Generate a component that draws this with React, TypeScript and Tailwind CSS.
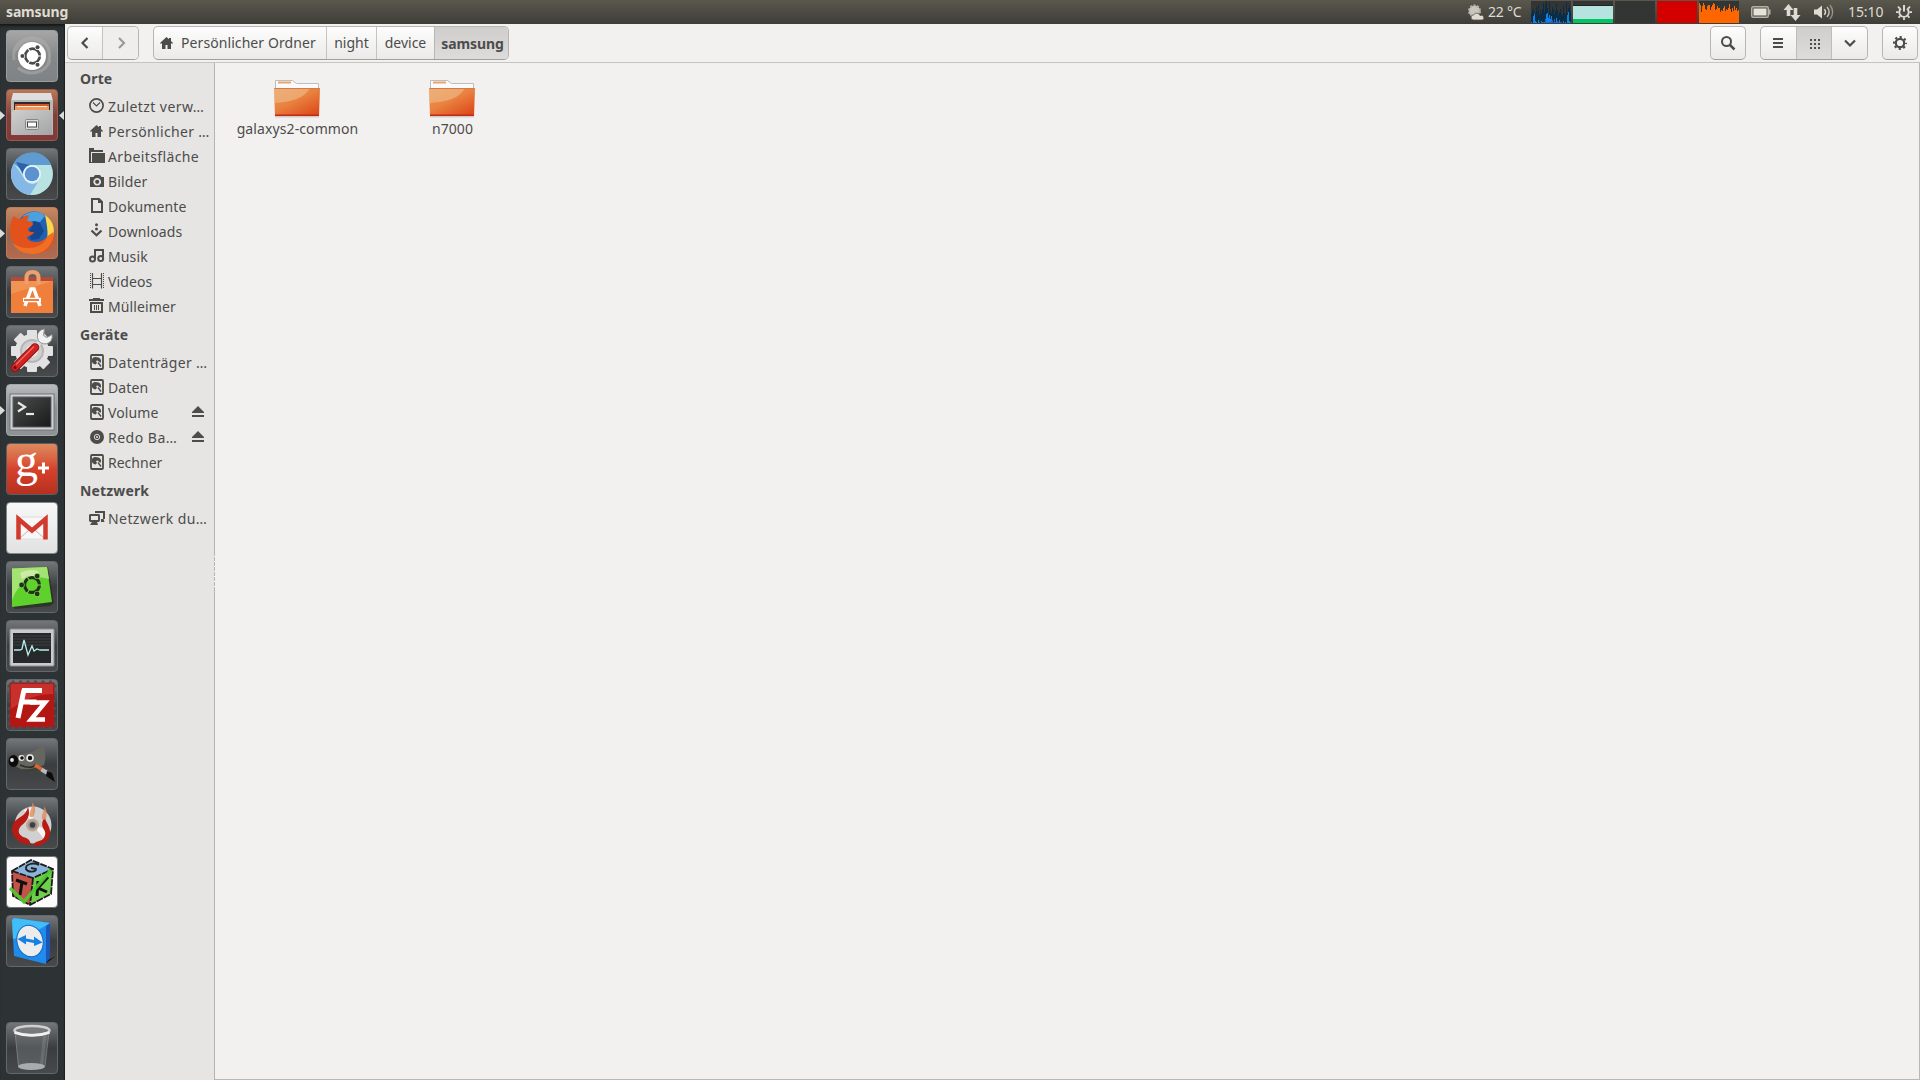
import React from "react";

type Kids = { children?: React.ReactNode };

/* ---------- Top panel ---------- */

const cpuLow = [2, 1, 4, 1, 2, 1, 10, 2, 1, 3, 2, 1, 5, 9, 4, 11, 2, 1, 5, 3, 1, 2, 4, 1];
const cpuHigh = [9, 12, 14, 7, 10, 16, 12, 18, 8, 13, 9, 14, 20, 11, 19, 22, 15, 9, 21, 12, 10, 16, 14, 9, 12, 19, 13, 8, 11, 14, 9, 7, 17, 10, 8, 20, 9, 15, 18, 12];
const cpuBlue = [1, 0, 7, 9, 2, 1, 0, 3, 1, 0, 2, 1, 0, 1, 4, 9, 10, 5, 8, 4, 7, 3, 1, 2, 0, 5, 1, 0, 3, 1, 0, 0, 2, 0, 1, 0, 8, 11, 2, 1];
const loadTop = [2, 11, 10, 16, 19, 14, 13, 12, 16, 17, 14, 12, 15, 17, 19, 15, 12, 13, 16, 14, 11, 10, 12, 11, 14, 13, 11, 13, 12, 14, 15, 13, 10, 14, 11, 13, 12, 14, 11, 12];

function Graph({ children }: Kids) {
  return (
    <svg className="block h-[22px] w-10 bg-[#333535]" viewBox="0 0 40 22" shapeRendering="crispEdges">
      {children}
    </svg>
  );
}

function TopBar() {
  return (
    <header className="flex h-6 w-full shrink-0 items-center bg-linear-to-b from-[#5a584d] to-[#3e3d38] text-[#dfdbd2]">
      <div className="w-[1467px] pl-[6px] text-[14px] leading-6 font-bold tracking-[-0.15px]">samsung</div>
      <svg className="h-[18px] w-[18px] shrink-0" viewBox="0 0 18 18">
        <circle cx="7.5" cy="8" r="5.5" fill="#c9c5bc" stroke="#b5b1a8" strokeWidth="2" strokeDasharray="2.2 1.255" />
        <path d="M6.5 17a2.6 2.6 0 0 1 .3-5.2 3.4 3.4 0 0 1 6.2.8 2.3 2.3 0 0 1 2.5 4.4z" fill="#dfdbd2" stroke="#55534a" strokeWidth=".8" />
      </svg>
      <div className="ml-[3px] w-[43px] text-[14px] leading-6 tracking-[-0.2px] whitespace-nowrap">22 °C</div>
      <div className="flex gap-[2px]">
        <Graph>
          {cpuHigh.map((h, i) => <rect key={i} x={i} y={22 - h} width="1" height={h} fill="#0a2c45" />)}
          {cpuBlue.map((h, i) => <rect key={i} x={i} y={22 - h} width="1" height={h} fill="#1080e8" />)}
          {cpuLow.map((h, i) => <rect key={i} x={i + 8} y={22 - h / 3} width="1" height={h / 3} fill="#1a5fc0" />)}
        </Graph>
        <Graph>
          <rect y="4" width="40" height="1" fill="#222" />
          <rect y="5" width="40" height="13" fill="#b5e3e0" />
          <rect y="18" width="40" height="4" fill="#00c562" />
        </Graph>
        <Graph />
        <Graph><rect width="40" height="22" fill="#d40000" /></Graph>
        <Graph>
          {loadTop.map((h, i) => {
            const v = i < 2 ? 20 - i * 2 : h + (i % 5 === 0 ? 4 : 1);
            return <rect key={i} x={i} y={22 - v} width="1" height={v} fill="#ff6600" />;
          })}
        </Graph>
      </div>
      <svg className="ml-3 h-[14px] w-5 shrink-0" viewBox="0 0 20 14">
        <rect x=".75" y="1.75" width="16.5" height="10.5" rx="1.5" fill="none" stroke="#b5b2a8" strokeWidth="1.5" />
        <rect x="2.5" y="3.5" width="13" height="7" fill="#e8e3d8" />
        <path d="M18 4.5h1.5v5H18z" fill="#b5b2a8" />
      </svg>
      <svg className="ml-3 h-[18px] w-[18px] shrink-0" viewBox="0 0 18 18" fill="#dfdbd2">
        <path d="M5.5 1 10.5 7H7.3v6H3.7V7H.5z" />
        <path d="M12.5 18 17.5 12h-3.200V5h-3.600v7H7.5z" />
      </svg>
      <svg className="ml-[13px] h-4 w-5 shrink-0" viewBox="0 0 20 16" fill="none">
        <path d="M0 5.5h3L8 1.5v13L3 10.500H0z" fill="#dfdbd2" />
        <path d="M10.3 5.2a4 4 0 0 1 0 5.6" stroke="#dfdbd2" strokeWidth="1.6" />
        <path d="M13 3a7 7 0 0 1 0 10" stroke="#c2beb5" strokeWidth="1.5" />
        <path d="M15.8 1a10 10 0 0 1 0 14" stroke="#98958b" strokeWidth="1.4" />
      </svg>
      <div className="ml-[14px] w-[48px] text-[14px] leading-6 tracking-[-0.1px]">15:10</div>
      <svg className="h-[18px] w-4 shrink-0" viewBox="0 0 16 18" fill="none" stroke="#dfdbd2">
        <path d="M5 5.6a4.7 4.7 0 1 0 6 0" strokeWidth="1.9" />
        <path d="M8 2v6.500" strokeWidth="2" />
        <path d="M0 9.200h2.500M13.500 9.200H16M2 3.700l1.800 1.800M14 3.700l-1.800 1.800M2.500 14.700l1.700-1.700M13.500 14.700l-1.700-1.700M8 14.500V17" strokeWidth="1.800" />
      </svg>
    </header>
  );
}

/* ---------- Launcher ---------- */

const glass = "bg-linear-to-b from-[#74777a] via-[#3a3d3f] to-[#47494b] border-[#65686a]";

function Tile({ children, look = glass, running, active }: Kids & { look?: string; running?: boolean; active?: boolean }) {
  return (
    <div className="flex h-[52px] w-[65px] shrink-0 items-center">
      <div className="w-[6px] shrink-0">
        {running && (
          <svg className="h-[9px] w-[5px]" viewBox="0 0 5 9"><path d="M0 0v9l5-4.500z" fill="#dcdcdc" /></svg>
        )}
      </div>
      <div className={`h-[52px] w-[52px] shrink-0 rounded-[4px] border ${look}`}>
        <svg className="-m-px block h-[52px] w-[52px] overflow-visible" viewBox="0 0 52 52">{children}</svg>
      </div>
      <div className="flex w-[6px] shrink-0 justify-end">
        {active && (
          <svg className="h-[9px] w-[5px]" viewBox="0 0 5 9"><path d="M5 0v9L0 4.500z" fill="#dcdcdc" /></svg>
        )}
      </div>
    </div>
  );
}

function Circle3({ cx, cy, r, color, halo, w }: { cx: number; cy: number; r: number; color: string; halo: string; w: number }) {
  const d = r * 1.38;
  const pts = [180, -60, 60].map((a) => [cx + d * Math.cos((a * Math.PI) / 180), cy + d * Math.sin((a * Math.PI) / 180)]);
  return (
    <g>
      <circle cx={cx} cy={cy} r={r} fill="none" stroke={color} strokeWidth={w} />
      {[0, 120, 240].map((a) => (
        <path key={a} d={`M${cx + r - w} ${cy}h${w * 2}`} stroke={halo} strokeWidth="1" transform={`rotate(${a} ${cx} ${cy})`} />
      ))}
      {pts.map(([x, y], i) => <circle key={i} cx={x} cy={y} r={w * 0.75} fill={color} stroke={halo} strokeWidth="1.2" paintOrder="stroke" />)}
    </g>
  );
}

function Launcher() {
  return (
    <nav className="flex w-[65px] shrink-0 flex-col border-r border-[#1c1f20] bg-[#2d3335] pt-[6px] shadow-[inset_0_4px_3px_-2px_#151717]">
      <div className="flex flex-col gap-[7px]">
        {/* Dash */}
        <Tile look="bg-linear-to-b from-[#a7a6a6] via-[#85898c] to-[#808386] border-[#9c9d9f]">
          <path d="M8 30C5 14 20 5 32 9c10 3 14 14 10 25M12 38c12 9 28 5 32-8M10 20c5-12 20-14 28-6" fill="none" stroke="#b5b1ad" strokeWidth="3" opacity=".5" />
          <circle cx="26" cy="26" r="14" fill="#fff" />
          <Circle3 cx={26.5} cy={26} r={7.3} color="#4a4a4a" halo="#fff" w={2.7} />
        </Tile>
        {/* Files */}
        <Tile running active look="bg-linear-to-b from-[#b97a58] via-[#813f3b] to-[#823a39] border-[#9a5a50]">
          <defs>
            <linearGradient id="cab" x1="0" y1="0" x2="1" y2="1"><stop offset="0" stopColor="#cfcfce" /><stop offset="1" stopColor="#a3a4a5" /></linearGradient>
          </defs>
          <path d="M7 4h38l2 8H5z" fill="#dedede" />
          <rect x="5" y="11" width="42" height="35" rx="1" fill="#b8b9b9" />
          <rect x="8" y="13" width="36" height="10" fill="#2c2a2a" />
          <rect x="9" y="15" width="34" height="4" fill="#d25527" />
          <rect x="9" y="17" width="34" height="4" fill="#f09a62" />
          <rect x="11" y="17" width="30" height="1" fill="#ffe9d8" />
          <path d="M8 21h36l2 2v23H6V23z" fill="url(#cab)" />
          <rect x="19.5" y="30.5" width="13" height="10" rx="1" fill="#dcdcdc" stroke="#858687" />
          <rect x="21.5" y="33" width="9" height="5" fill="#fff" stroke="#444" />
        </Tile>
        {/* Chromium */}
        <Tile>
          <circle cx="26" cy="26" r="21" fill="#b9e3e2" />
          <path d="M7.5 15.5A21 21 0 0 1 45.500 17H26a9 9 0 0 0-8.500 6z" fill="#5f9bd0" />
          <path d="M7.8 15.5A21 21 0 0 0 24 47l8-13a9 9 0 0 1-14-4z" fill="#85b8e6" />
          <path d="M10 14l8 14a8 8 0 0 1 6-11z" fill="#2a62b0" />
          <circle cx="26" cy="26" r="9" fill="#eaf5fb" />
          <circle cx="26" cy="26" r="7.3" fill="#5a93cf" />
        </Tile>
        {/* Firefox */}
        <Tile running look="bg-linear-to-b from-[#c88962] via-[#9c6650] to-[#b26a4e] border-[#c07a5c]">
          <circle cx="28" cy="21" r="16.5" fill="#1e62b4" />
          <path d="M17 9c6-5 17-6 22 0l-5 6-7-1-5 2z" fill="#4ba0dd" />
          <path d="M28 14l6 2 4 8-5 8-8 1-2-8z" fill="#174791" />
          <path d="M8 9c2 2 4 3 7 3 3-3 5-4 8-4l-2 6c4 0 6 1 6 3s-4 3-5 5c0 3 3 3 6 3-1 4-6 3-7 6 3 5 14 6 20-1 2-4 3-8 2-12 7 6 7 17 1 23C32 53 6 46 4 25c0-7 1-12 4-16z" fill="#e4521b" />
          <path d="M39 8c7 5 10 12 8.500 19-1.500 7-6 11-11 13 4-5 5.500-10 5-15-.3-6-1.500-12-2.500-17z" fill="#fbd84a" />
          <path d="M47.500 25c.5 13-9 22-21 22-9 0-16-4-20-11 14 10 32 4 35-7z" fill="#ee6f25" />
        </Tile>
        {/* Software centre */}
        <Tile>
          <path d="M5 11h42v5H5z" fill="#b24a37" />
          <path d="M5 15h42v32H5z" fill="#ef7f3a" />
          <path d="M5 15h42L5 28z" fill="#f2a064" opacity=".6" />
          <path d="M20.500 18v-6q0-6 6-6t6 6v6" fill="none" stroke="#eda06b" strokeWidth="4" />
          <path d="M19 40l6-17h3l6 17" fill="none" stroke="#fff" strokeWidth="3.5" />
          <path d="M17 34h18" stroke="#fff" strokeWidth="4.5" />
          <path d="M18 34h15" stroke="#e9722c" strokeWidth="1.8" />
        </Tile>
        {/* System settings */}
        <Tile>
          <g fill="#e2e2e2">
            {[0, 45, 90, 135].map((a) => <rect key={a} x="21" y="5" width="10" height="42" rx="1" transform={`rotate(${a} 26 26)`} />)}
            <circle cx="26" cy="26" r="17" />
          </g>
          <circle cx="26" cy="26" r="11" fill="#d0d0d0" stroke="#b6b6b6" strokeWidth="2" />
          <circle cx="26" cy="26" r="6" fill="#ececec" />
          <path d="M25 26L37 14" stroke="#dcdcdc" strokeWidth="5" />
          <path d="M46 9.500a7.500 7.500 0 1 1-7.500-5.500l-1 6.500 3.500 2z" fill="#f1f1f1" stroke="#8f8f8f" strokeWidth="1" />
          <path d="M9 42.500L29 22.500" stroke="#8d1212" strokeWidth="8.5" strokeLinecap="round" />
          <path d="M9 42.500L29 22.500" stroke="#d32222" strokeWidth="6.5" strokeLinecap="round" />
          <path d="M10 39.500L28 21.500" stroke="#ee6b62" strokeWidth="1.5" />
          <circle cx="9" cy="42.5" r="1.5" fill="#5e0a0a" />
        </Tile>
        {/* Terminal */}
        <Tile running look="bg-linear-to-b from-[#b9bbbe] via-[#8c9094] to-[#8f9396] border-[#a4a7aa]">
          <defs><linearGradient id="scr" x1="0" y1="0" x2="1" y2="1"><stop offset="0" stopColor="#4b4e4d" /><stop offset="1" stopColor="#171a19" /></linearGradient></defs>
          <rect x="4" y="10" width="44" height="36" fill="#d0d2d4" stroke="#70757a" />
          <rect x="7" y="13" width="38" height="30" fill="url(#scr)" stroke="#5c6063" />
          <path d="M12 18.500l7 4.500-7 4.500" fill="none" stroke="#e8e8e8" strokeWidth="2.2" />
          <path d="M20 30h8" stroke="#e8e8e8" strokeWidth="2.2" />
        </Tile>
        {/* Google plus */}
        <Tile look="bg-linear-to-b from-[#dc8a5f] via-[#d6412c] to-[#b8301f] border-[#5c5f60]">
          <text x="9" y="33" fontFamily="Liberation Serif" fontSize="46" fill="#fff">g</text>
          <path d="M32 25h11M37.500 19.500v11" stroke="#fff" strokeWidth="3" />
        </Tile>
        {/* Gmail */}
        <Tile look="bg-linear-to-b from-[#f8f8f8] to-[#e2e2e2] border-[#85888a]">
          <rect x="11" y="15" width="30" height="22" fill="#f7f7f7" stroke="#ddd" />
          <path d="M13 37l10-9M39 37l-10-9" stroke="#d9a9a1" strokeWidth="1" />
          <path d="M12.500 37.500V17L26 28.500 39.500 17v20.500" fill="none" stroke="#d23a2e" strokeWidth="4.5" />
        </Tile>
        {/* Ubuntu tweak */}
        <Tile>
          <path d="M7 8l35-2 6 36-4 3-36 3z" fill="#1e2a15" opacity=".6" />
          <path d="M6 7.500L41 6l5 35-40 5z" fill="#5fd02c" />
          <path d="M6 7.500L41 6l2 12q-14-4-24 3-8 5-13 18z" fill="#a5e274" />
          <path d="M14 12q8-5 18-2l2 6q-10-3-18 2z" fill="#dfeebd" opacity=".7" />
          <Circle3 cx={26} cy={24} r={7.5} color="#20321a" halo="#84d857" w={3.2} />
        </Tile>
        {/* System monitor */}
        <Tile>
          <rect x="4" y="9" width="44" height="37" rx="1" fill="#c9cbcc" stroke="#8e9193" />
          <rect x="7" y="13" width="38" height="30" fill="#26292a" />
          <path d="M7 16h38M7 19h38M7 22h38M7 25h38" stroke="#3e4142" />
          <path d="M8 30h6l2-1 2-9 4 15 4-9 2 5 3-2 3 1h9" fill="none" stroke="#b8ecec" strokeWidth="1.3" />
        </Tile>
        {/* FileZilla */}
        <Tile>
          <rect x="3.5" y="3.5" width="45" height="45" fill="#b41614" />
          <g fill="#4b4e50">
            {[7, 14.5, 22, 29.5, 37, 44.5].map((p) => (
              <React.Fragment key={p}>
                <circle cx={p} cy="3" r="1.7" /><circle cx={p} cy="49" r="1.7" />
                <circle cx="3" cy={p} r="1.7" /><circle cx="49" cy={p} r="1.7" />
              </React.Fragment>
            ))}
          </g>
          <path d="M5 5h42v10Q26 14 5 30z" fill="#d4433a" opacity=".6" />
          <path d="M12 39l6-28M16 11.500h20M14.500 23h16" fill="none" stroke="#fff" strokeWidth="5" />
          <path d="M24 23.500h15L25 40.500h14" fill="none" stroke="#fff" strokeWidth="4.5" />
        </Tile>
        {/* GIMP */}
        <Tile>
          <path d="M4 22c5-3 9-5 13-6 6-1 14-3 20-9 3 4 3 15 1 20-3 8-16 10-23 4-4-2-9-4-11-9z" fill="#64665f" />
          <path d="M15 31c6 6 20 4 23-4q-11 5-23 4z" fill="#3d3f3b" />
          <ellipse cx="7.5" cy="23" rx="5" ry="6" fill="#0c0c0c" /><circle cx="6" cy="22" r="1.9" fill="#e8e8e8" />
          <circle cx="15.5" cy="20" r="3" fill="#ececec" /><circle cx="24" cy="20" r="3.8" fill="#ececec" />
          <circle cx="16" cy="20" r="1.8" fill="#111" /><circle cx="24" cy="20" r="2.2" fill="#111" />
          <path d="M14 27q12 5 16-1" fill="none" stroke="#2c2c2c" strokeWidth="1.5" />
          <path d="M29 27l7 4.500" stroke="#e2622e" strokeWidth="3.5" />
          <path d="M35.500 31.500l6 3.500" stroke="#b7bcc0" strokeWidth="4" />
          <path d="M41 33l5 2 3 9-9-6z" fill="#0c0c0c" />
        </Tile>
        {/* Disc burner */}
        <Tile>
          <circle cx="27" cy="28" r="18.5" fill="#d0d0d0" />
          <path d="M27 28L18 13a18 18 0 0 1 9-3zM27 28l17 5a18 18 0 0 1-6 9z" fill="#f6f6f6" />
          <circle cx="26.5" cy="28" r="6.5" fill="#c2a58d" /><circle cx="26.5" cy="28" r="3.5" fill="#3c4043" stroke="#8b9196" strokeWidth="1.5" />
          <path d="M19 47C6 43 3 31 9 24c6-5 11-6 13-14 3 8-1 14-6 18-5 5-4 9 1 12 5 1 7 3 8 8z" fill="#b81a14" />
          <path d="M27 49c2-6 7-4 10-7 4-5 2-8 0-11-2-5 0-8 2-11 0 5 6 9 5 17-1 8-9 13-17 12z" fill="#b81a14" />
          <path d="M24 20c-2-5 3-8 2-15 4 5 4 10 1 15zM36 22c-1-5 3-8 2-13 4 6 3 10 1 14z" fill="#e08a5c" opacity=".8" />
        </Tile>
        {/* GTK */}
        <Tile look="bg-[#fbfbfb] border-[#707375]">
          <path d="M6 15L25 4l22 9-20 9z" fill="#8ab4dc" />
          <path d="M6 15l21 7-3 27L7 40z" fill="#c4544a" />
          <path d="M27 22l20-9-2 25-21 11z" fill="#6fcf4c" />
          <path d="M6 15L25 4l22 9-2 25-21 11L7 40zM6 15l21 7 20-9M27 22l-3 27" fill="none" stroke="#1c1c1c" strokeWidth="1.8" strokeDasharray="7 1" />
          <path d="M33 9c-5-3-14-1-13 4 2 4 10 3 10 0l-5-1" fill="none" stroke="#222" strokeWidth="1.8" />
          <path d="M10 24l11 4M16 26l-2 13" stroke="#111" strokeWidth="3" />
          <path d="M32 25l-1 15M42 21L32 32l9 4" fill="none" stroke="#111" strokeWidth="3" />
          <path d="M4 32l14 14L45 14" fill="none" stroke="#4dcb2e" strokeWidth="3.5" opacity=".9" />
        </Tile>
        {/* TeamViewer */}
        <Tile>
          <path d="M40 46l10-5-11 8z" fill="#141414" />
          <path d="M39 11l5-4v36l-5 6z" fill="#1d56b5" />
          <path d="M6 5l2-2 36 5-4 3v38L8 41z" fill="#1e8cec" />
          <path d="M6 5l2-2 36 5-5 3L24 20 7 24z" fill="#41bdf7" />
          <ellipse cx="24" cy="26" rx="13" ry="16" fill="#ececec" stroke="#1567c6" transform="rotate(-14 24 26)" />
          <path d="M11.500 24l8.500-4v3.500l8 1.500v-3.500l8.500 6-8.500 3.500v-3l-8-1.500v3z" fill="#1581e4" />
        </Tile>
      </div>
      <div className="mt-auto pb-[6px]">
        {/* Trash */}
        <Tile>
          <path d="M9 9h34l-4 35q-13 5-27 0z" fill="#7d8182" opacity=".4" />
          <path d="M9 10l3.500 34M43 10l-4 34" stroke="#a5a8a9" opacity=".45" />
          <path d="M37 12l4-1-4 32h-3z" fill="#b5b8b9" opacity=".2" />
          <ellipse cx="25.5" cy="44.5" rx="13.5" ry="3.5" fill="#a6acb0" />
          <ellipse cx="26" cy="8.5" rx="17.5" ry="4.5" fill="#77797a" stroke="#cfcfcf" strokeWidth="2.5" />
          <path d="M8.500 10.500q17 6 35 0" fill="none" stroke="#f2f2f2" strokeWidth="2.5" />
        </Tile>
      </div>
    </nav>
  );
}

/* ---------- Small symbolic icons, 16px ---------- */

function Sym({ children }: Kids) {
  return <svg className="block h-4 w-4 shrink-0" viewBox="0 0 16 16" fill="#4c4c48">{children}</svg>;
}
const Clock = () => (
  <Sym><circle cx="7.5" cy="7.5" r="6.6" fill="none" stroke="#4c4c48" strokeWidth="1.7" /><path d="M4 4.500L7.500 8 11 4.500" fill="none" stroke="#4c4c48" strokeWidth="1.1" /></Sym>
);
const Home = () => <Sym><path d="M7.500 2L1 8v.5h2V14h3.500v-4h2v4H12V8.500h2V8l-2-2V3h-2v1.300z" /></Sym>;
const FolderS = () => <Sym><path d="M0 0h5v2h9v2H2v11H0z" /><path d="M3 5h13v10H0v-1h3z" /></Sym>;
const Camera = () => (
  <Sym><path fillRule="evenodd" d="M1 4h3.500L6 2h5l1.500 2H15v10H1zM8.200 5a3.800 3.800 0 1 0 .01 0z" /><circle cx="8.2" cy="8.8" r="2.1" /></Sym>
);
const Doc = () => <Sym><path d="M3 1h7l3 3v10H3z" fill="none" stroke="#4c4c48" strokeWidth="2" /><path d="M9 0v5h5z" /></Sym>;
const Down = () => (
  <Sym><circle cx="7.5" cy="1.7" r="1.5" /><circle cx="7.5" cy="5.9" r="1.5" /><path d="M2.500 7.500l5 4.800 5-4.800" fill="none" stroke="#4c4c48" strokeWidth="2.2" /></Sym>
);
const Music = () => (
  <Sym><path d="M6 11V2h8v8.500" fill="none" stroke="#4c4c48" strokeWidth="2" /><circle cx="3.5" cy="10.9" r="2.5" fill="none" stroke="#4c4c48" strokeWidth="2" /><circle cx="11.7" cy="10.5" r="2.5" fill="none" stroke="#4c4c48" strokeWidth="2" /></Sym>
);
const Film = () => (
  <Sym><path d="M1 0h1v1H1zM1 2h1v1H1zM1 4h1v1H1zM1 6h1v1H1zM1 8h1v1H1zM1 10h1v1H1zM1 12h1v1H1zM1 14h1v1H1zM14 0h1v1h-1zM14 2h1v1h-1zM14 4h1v1h-1zM14 6h1v1h-1zM14 8h1v1h-1zM14 10h1v1h-1zM14 12h1v1h-1zM14 14h1v1h-1z" /><path d="M3.500 0v15.500M12.500 0v15.500M3.500 5.500h9M3.500 11.500h9" stroke="#4c4c48" fill="none" strokeWidth="1.2" /></Sym>
);
const Bin = () => (
  <Sym><path d="M0 1h4V0h7v1h4v2H0z" /><path d="M2 5h11v9H2z" fill="none" stroke="#4c4c48" strokeWidth="2" /><path d="M5 7h1v5H5zM7 7h1v5H7zM9 7h1v5H9z" /></Sym>
);
const Drive = () => (
  <Sym><rect x="2" y="1" width="12" height="14" rx="1" fill="none" stroke="#4c4c48" strokeWidth="1.8" /><path d="M8 3.200a3.800 3.800 0 1 0-1.500 7.300L8 9 7 7l1.500-.5L11.500 9A3.800 3.800 0 0 0 8 3.200z" /><path d="M9 8.500l3 4" stroke="#4c4c48" strokeWidth="1.4" /></Sym>
);
const Disc = () => (
  <Sym><circle cx="8" cy="8" r="7" /><circle cx="8" cy="8" r="2.7" fill="none" stroke="#e6e5e3" strokeWidth=".9" /><circle cx="8" cy="8" r="1" fill="#e6e5e3" /></Sym>
);
const Net = () => (
  <Sym><path d="M6 3V1h10v8h-1.500l1 3H12V9h2V3z" /><rect x="1" y="5" width="9" height="6" rx=".5" fill="none" stroke="#4c4c48" strokeWidth="1.9" /><path d="M3 12h5l1 3H1z" /></Sym>
);

/* ---------- Toolbar ---------- */

const segment = "flex h-full items-center justify-center";
const group = "flex h-[34px] overflow-hidden rounded-[5px] border border-[#b7b6b3] border-b-[#a09f9b] bg-linear-to-b from-[#fdfdfd] to-[#ebeae8]";
const pressed = "bg-linear-to-b from-[#cfcecd] to-[#dddcda]";

function Toolbar() {
  return (
    <div className="flex h-[39px] shrink-0 items-start border-b border-[#c5c4c1] bg-[#f2f1f0] pt-[2px] pr-[2px] pl-[2px] text-[14px] text-[#4c4c4c]">
      <div className={`${group} w-[72px]`}>
        <div className={`${segment} w-[35px] border-r border-[#c4c3c0]`}>
          <svg className="h-4 w-4" viewBox="0 0 16 16"><path d="M10.500 3L5.500 8l5 5" fill="none" stroke="#4c4c48" strokeWidth="2.2" /></svg>
        </div>
        <div className={`${segment} w-[35px] bg-[#efeeed]`}>
          <svg className="h-4 w-4" viewBox="0 0 16 16"><path d="M6 3l5 5-5 5" fill="none" stroke="#9a9a97" strokeWidth="2.2" /></svg>
        </div>
      </div>
      <div className={`${group} ml-[14px] w-[356px]`}>
        <div className={`${segment} w-[173px] justify-start gap-[6px] border-r border-[#c4c3c0] pl-[5px] whitespace-nowrap`}>
          <Home /><span className="pb-[2px] tracking-[0.08px]">Persönlicher Ordner</span>
        </div>
        <div className={`${segment} w-[50px] border-r border-[#c4c3c0] pb-[2px]`}>night</div>
        <div className={`${segment} w-[58px] border-r border-[#b7b6b3] pb-[2px]`}>device</div>
        <div className={`${segment} ${pressed} w-[73px] pl-[2px] font-bold tracking-[-0.1px]`}>samsung</div>
      </div>
      <div className={`${group} ml-auto w-[36px]`}>
        <div className={`${segment} w-full`}>
          <svg className="h-4 w-4" viewBox="0 0 16 16" fill="none" stroke="#4c4c48"><circle cx="6.5" cy="6.5" r="4.5" strokeWidth="2" /><path d="M9.500 9.500l5 5" strokeWidth="2.5" /></svg>
        </div>
      </div>
      <div className={`${group} ml-[14px] w-[108px]`}>
        <div className={`${segment} w-[35px]`}>
          <svg className="h-4 w-[17px]" viewBox="0 0 17 16" fill="#4c4c48"><path d="M3 3h10v2H3zM3 7h10v2H3zM3 11h10v2H3z" /></svg>
        </div>
        <div className={`${segment} ${pressed} w-[36px] border-x border-[#bdbcb9]`}>
          <svg className="h-4 w-4" viewBox="0 0 16 16" fill="#4c4c48" shapeRendering="crispEdges">
            {[4, 8, 12].map((y) => [4, 8, 12].map((x) => <rect key={`${x}-${y}`} x={x} y={y} width="2" height="2" />))}
          </svg>
        </div>
        <div className={`${segment} w-[35px]`}>
          <svg className="h-4 w-4" viewBox="0 0 16 16"><path d="M3 5.500l5 5 5-5" fill="none" stroke="#4c4c48" strokeWidth="2.2" /></svg>
        </div>
      </div>
      <div className={`${group} ml-[14px] w-[36px]`}>
        <div className={`${segment} w-full`}>
          <svg className="h-4 w-4" viewBox="0 0 16 16" fill="none" stroke="#4c4c48">
            <circle cx="8" cy="8" r="4.2" strokeWidth="2.2" />
            <circle cx="8" cy="8" r="6" strokeWidth="2" strokeDasharray="2.2 2.512" strokeDashoffset="1.1" />
          </svg>
        </div>
      </div>
    </div>
  );
}

/* ---------- Sidebar ---------- */

const Heading = ({ children }: Kids) => <div className="h-[31px] pl-[15px] text-[14px] leading-[31px] font-bold tracking-[0.15px]">{children}</div>;

function Row({ icon, label, eject, fit = "tracking-[0.12px]" }: { icon: React.ReactNode; label: string; eject?: boolean; fit?: string }) {
  return (
    <div className="flex h-[25px] items-start pl-[24px]">
      <div className="pt-[4px]">{icon}</div>
      <span className={`ml-[3px] text-[14px] leading-[25px] whitespace-nowrap ${fit}`}>{label}</span>
      {eject && (
        <svg className="mt-[6px] mr-[10px] ml-auto h-3 w-3" viewBox="0 0 12 12" fill="#4c4c48"><path d="M6 0l6 6v1H0V6zM0 9h12v2H0z" /></svg>
      )}
    </div>
  );
}

function Sidebar() {
  return (
    <aside className="flex w-[149px] shrink-0 flex-col overflow-hidden bg-[#e6e5e3] text-[#4c4c4c]">
      <Heading>Orte</Heading>
      <Row icon={<Clock />} label="Zuletzt verw…" fit="tracking-[0.42px]" />
      <Row icon={<Home />} label="Persönlicher …" fit="tracking-[0.34px]" />
      <Row icon={<FolderS />} label="Arbeitsfläche" fit="tracking-[0.38px]" />
      <Row icon={<Camera />} label="Bilder" />
      <Row icon={<Doc />} label="Dokumente" />
      <Row icon={<Down />} label="Downloads" />
      <Row icon={<Music />} label="Musik" />
      <Row icon={<Film />} label="Videos" />
      <Row icon={<Bin />} label="Mülleimer" />
      <Heading>Geräte</Heading>
      <Row icon={<Drive />} label="Datenträger …" fit="tracking-[0.34px]" />
      <Row icon={<Drive />} label="Daten" />
      <Row icon={<Drive />} label="Volume" eject />
      <Row icon={<Disc />} label="Redo Ba…" eject fit="tracking-[0.5px]" />
      <Row icon={<Drive />} label="Rechner" fit="" />
      <Heading>Netzwerk</Heading>
      <Row icon={<Net />} label="Netzwerk du…" fit="tracking-[0.42px]" />
    </aside>
  );
}

/* ---------- Files ---------- */

function Folder({ name }: { name: string }) {
  return (
    <div className="flex w-[155px] flex-col items-center">
      <svg className="-ml-px block h-[40px] w-[48px]" viewBox="0 0 48 40">
        <defs>
          <linearGradient id="fold" x1="0" y1="0" x2=".8" y2="1">
            <stop offset="0" stopColor="#ec9a58" /><stop offset=".5" stopColor="#e9813f" /><stop offset="1" stopColor="#de4b1c" />
          </linearGradient>
        </defs>
        <path d="M2.500 12V1.500h17l4 3h22V12z" fill="#fafafa" stroke="#bdbdbd" />
        <path d="M5 3.500h13" stroke="#eba26b" strokeWidth="2" />
        <path d="M2 37.500h44" stroke="#d0cecb" strokeWidth="2" />
        <path d="M1 9h46l-1 28H2z" fill="url(#fold)" />
        <path d="M1 9h36C32 19 18 23 1.500 24z" fill="#efbd8c" opacity=".6" />
        <path d="M1.500 9.500h45" stroke="#d87a45" />
        <path d="M2 36.300h44" stroke="#c02a16" strokeWidth="1.4" />
      </svg>
      <div className="text-[14px] leading-[20px] tracking-[0.1px] text-[#4c4c4c]">{name}</div>
    </div>
  );
}

export default function App() {
  return (
    <div className="flex h-[1080px] w-[1920px] flex-col overflow-hidden bg-[#f2f1f0] font-['Noto_Sans',sans-serif]">
      <TopBar />
      <div className="flex min-h-0 flex-1">
        <Launcher />
        <div className="flex min-w-0 flex-1 flex-col">
          <Toolbar />
          <div className="flex min-h-0 flex-1">
            <Sidebar />
            <div className="flex w-px shrink-0 flex-col bg-[#b5b4b2] pt-[493px]">
              <div className="flex flex-col gap-[4px]">
                {[0, 1, 2, 3, 4, 5, 6].map((i) => <div key={i} className="h-px w-px bg-white" />)}
              </div>
            </div>
            <main className="flex flex-1 items-start border-r border-b border-[#b9b8b6] bg-[#f2f1f0] pt-4 pl-[5px]">
              <Folder name="galaxys2-common" />
              <Folder name="n7000" />
            </main>
          </div>
        </div>
      </div>
    </div>
  );
}
